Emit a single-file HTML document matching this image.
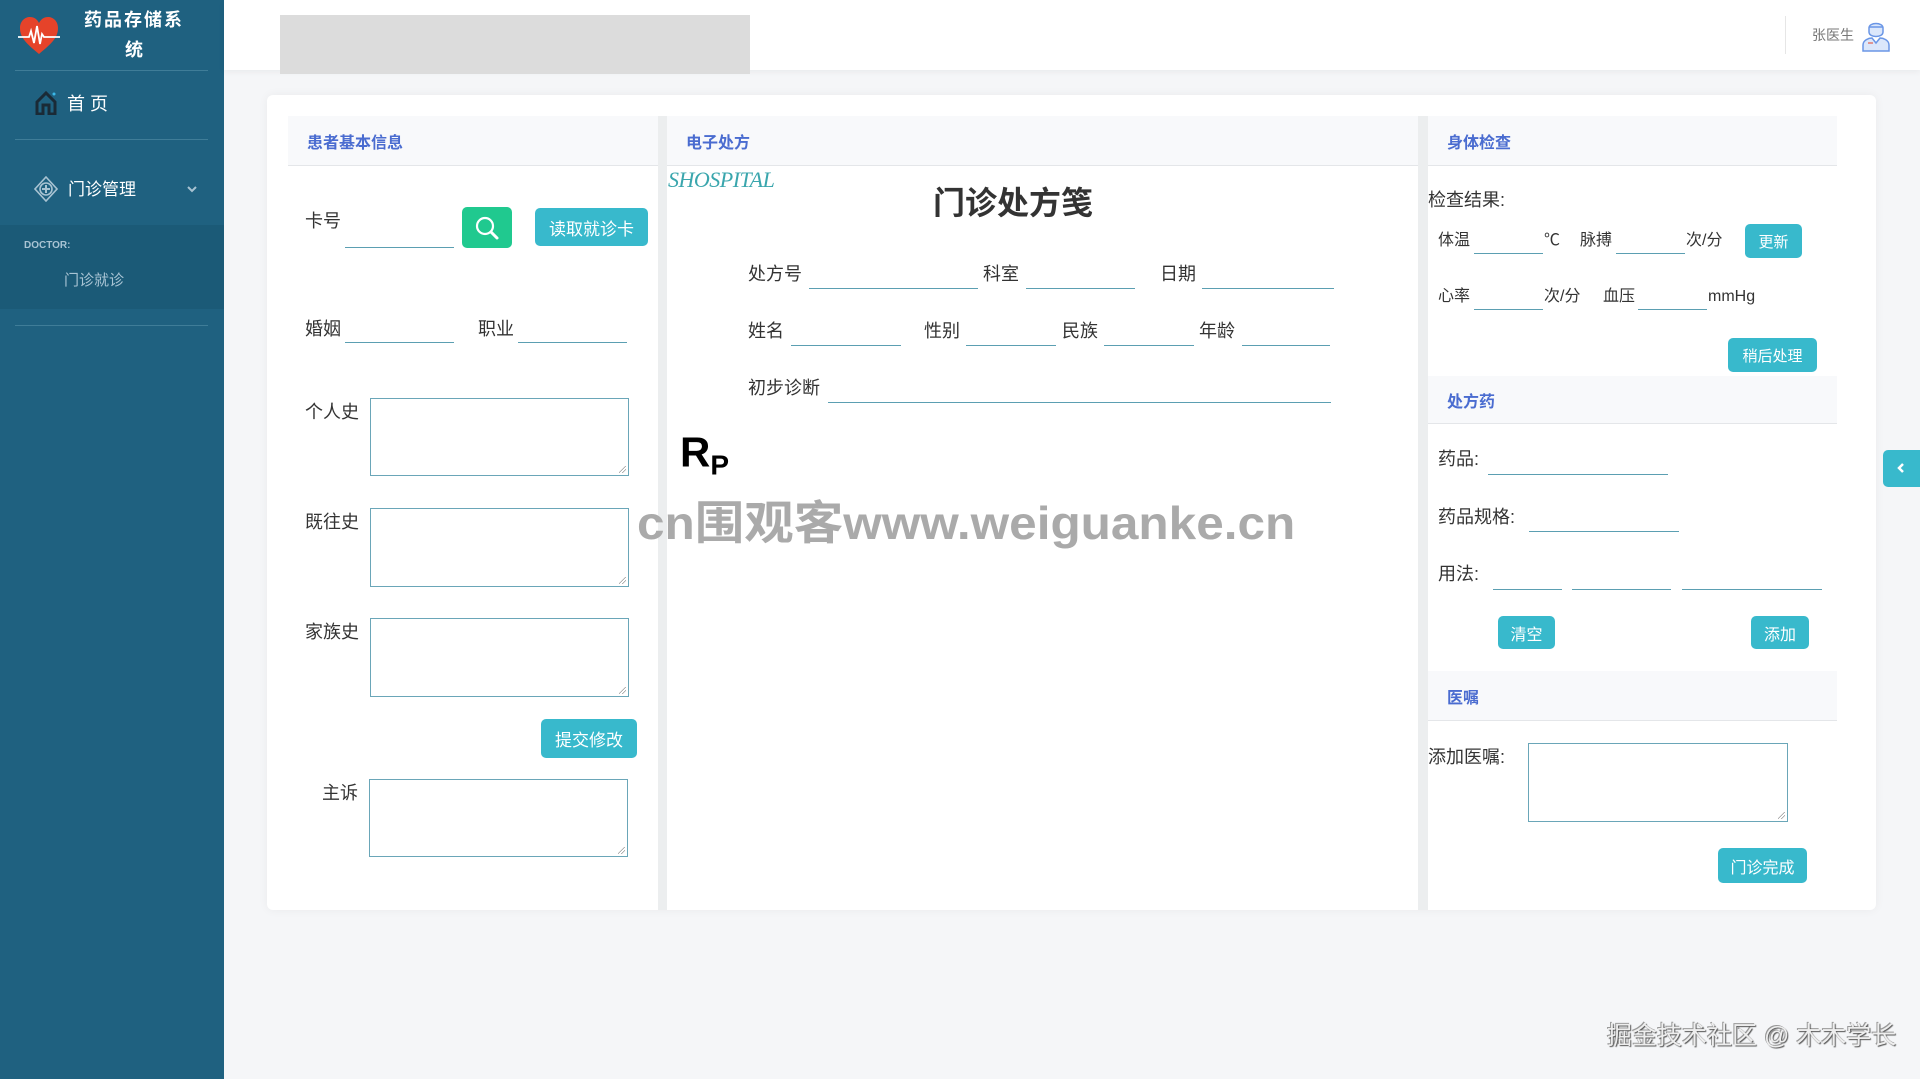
<!DOCTYPE html>
<html><head><meta charset="utf-8"><style>
*{margin:0;padding:0;box-sizing:border-box}
body{width:1920px;height:1079px;overflow:hidden;background:#f5f6f8;font-family:"Liberation Sans","Noto Sans CJK SC",sans-serif;position:relative;color:#333}
.a{position:absolute}
.t{position:absolute;font-size:18px;line-height:24px;transform:translateY(-50%);white-space:nowrap;color:#333}
.ul{position:absolute;height:1px;background:#5b9fb2}
.ta{position:absolute;border:1px solid #6aa6b8;background:#fff}
.ta:after{content:"";position:absolute;right:2px;bottom:2px;width:7px;height:7px;background:linear-gradient(135deg,transparent 45%,#999 46%,#999 52%,transparent 53%,transparent 70%,#999 71%,#999 77%,transparent 78%)}
.btn{position:absolute;background:#38b9cc;color:#fff;border-radius:5px;font-size:17px;display:flex;align-items:center;justify-content:center}
.hd{position:absolute;background:#f8f9fb;border-bottom:1px solid #e4e6e9}
.hd span{position:absolute;left:19px;top:50%;transform:translateY(-50%);color:#4a6cd0;font-weight:bold;font-size:16px}
.sl{position:absolute;left:15px;width:193px;height:1px;background:#3f7d98}
</style></head><body>
<!-- sidebar -->
<div class="a" style="left:0;top:0;width:224px;height:1079px;background:#1f6180"></div>
<div class="a" style="left:0;top:225px;width:224px;height:84px;background:#1b5a77"></div>
<svg class="a" style="left:17px;top:16px" width="44" height="40" viewBox="0 0 44 40"><path d="M22 38 C10 28 3 22 3 12 C3 5 8 1 13 1 C17 1 20 3 22 7 C24 3 27 1 31 1 C36 1 41 5 41 12 C41 22 34 28 22 38Z" fill="#e5432a"/><path d="M1 21 H12 L14 15 L17 27 L20 10 L23 28 L25 18 L27 21 H43" fill="none" stroke="#fff" stroke-width="1.8"/></svg>
<div class="t" style="left:74px;top:20px;width:120px;text-align:center;color:#fff;font-weight:bold;font-size:18px;letter-spacing:2px">药品存储系</div>
<div class="t" style="left:74px;top:50px;width:120px;text-align:center;color:#fff;font-weight:bold;font-size:18px">统</div>
<div class="sl" style="top:70px"></div>
<svg class="a" style="left:35px;top:91px" width="22" height="24" viewBox="0 0 22 24"><path d="M2 11 L11 2 L20 11 V23 H14 V14 H8 V23 H2Z" fill="none" stroke="#1a2a36" stroke-width="3"/><circle cx="19" cy="3" r="1.5" fill="#3bb8e8"/></svg>
<div class="t" style="left:67px;top:104px;color:#fff;font-size:18px">首 页</div>
<div class="sl" style="top:139px"></div>
<svg class="a" style="left:34px;top:176px" width="24" height="26" viewBox="0 0 24 26"><path d="M12 1 L23 13 L12 25 L1 13Z" fill="none" stroke="#a8c3d2" stroke-width="1.6"/><circle cx="12" cy="13" r="6" fill="none" stroke="#a8c3d2" stroke-width="1.6"/><path d="M12 9 V17 M8 13 H16" stroke="#a8c3d2" stroke-width="2"/></svg>
<div class="t" style="left:68px;top:190px;color:#fff;font-size:17px">门诊管理</div>
<svg class="a" style="left:186px;top:184px" width="12" height="10" viewBox="0 0 12 10"><path d="M2 3 L6 7 L10 3" fill="none" stroke="#a8c3d2" stroke-width="2"/></svg>
<div class="t" style="left:24px;top:246px;color:#a9c4d4;font-size:10px;font-weight:bold">DOCTOR:</div>
<div class="t" style="left:64px;top:281px;color:#a9c4d4;font-size:15px">门诊就诊</div>
<div class="sl" style="top:325px"></div>
<!-- header -->
<div class="a" style="left:224px;top:0;width:1696px;height:70px;background:#fff;box-shadow:0 2px 6px rgba(0,0,0,.05)"></div>
<div class="a" style="left:280px;top:15px;width:470px;height:59px;background:#dcdcdc"></div>
<div class="a" style="left:1785px;top:16px;width:1px;height:38px;background:#e6e6e6"></div>
<div class="t" style="left:1812px;top:35px;color:#777;font-size:14px">张医生</div>
<svg class="a" style="left:1861px;top:18px" width="30" height="34" viewBox="0 0 30 34"><path d="M8 10 C8 4 22 4 22 10 V14 C22 20 8 20 8 14Z" fill="#dbe7fb" stroke="#6a96e6" stroke-width="1.5"/><path d="M8 9 H22" stroke="#6a96e6" stroke-width="1.5"/><path d="M2 33 V27 C2 22 8 20 11 20 L15 25 L19 20 C22 20 28 22 28 27 V33Z" fill="#dbe7fb" stroke="#6a96e6" stroke-width="1.5"/><path d="M7 25 H12" stroke="#e5432a" stroke-width="1"/></svg>
<!-- card -->
<div class="a" style="left:267px;top:95px;width:1609px;height:815px;background:#fff;border-radius:6px;box-shadow:0 0 10px rgba(0,0,0,.05)"></div>
<div class="a" style="left:658px;top:116px;width:9px;height:794px;background:#eceeef"></div>
<div class="a" style="left:1418px;top:116px;width:10px;height:794px;background:#eceeef"></div>
<!-- left panel -->
<div class="hd" style="left:288px;top:116px;width:370px;height:50px"><span>患者基本信息</span></div>
<div class="t" style="left:305px;top:221px">卡号</div>
<div class="ul" style="left:345px;top:247px;width:109px"></div>
<div class="a" style="left:462px;top:207px;width:50px;height:41px;background:#20c98f;border-radius:5px"></div>
<svg class="a" style="left:474px;top:215px" width="26" height="26" viewBox="0 0 26 26"><circle cx="11" cy="11" r="8" fill="none" stroke="#fff" stroke-width="2.2"/><path d="M17 17 L23 23" stroke="#fff" stroke-width="3" stroke-linecap="round"/></svg>
<div class="btn" style="left:535px;top:208px;width:113px;height:38px">读取就诊卡</div>
<div class="t" style="left:305px;top:329px">婚姻</div>
<div class="ul" style="left:345px;top:342px;width:109px"></div>
<div class="t" style="left:478px;top:329px">职业</div>
<div class="ul" style="left:518px;top:342px;width:109px"></div>
<div class="t" style="left:305px;top:412px">个人史</div>
<div class="ta" style="left:370px;top:398px;width:259px;height:78px"></div>
<div class="t" style="left:305px;top:522px">既往史</div>
<div class="ta" style="left:370px;top:508px;width:259px;height:79px"></div>
<div class="t" style="left:305px;top:632px">家族史</div>
<div class="ta" style="left:370px;top:618px;width:259px;height:79px"></div>
<div class="btn" style="left:541px;top:719px;width:96px;height:39px">提交修改</div>
<div class="t" style="left:322px;top:793px">主诉</div>
<div class="ta" style="left:369px;top:779px;width:259px;height:78px"></div>
<!-- middle -->
<div class="hd" style="left:667px;top:116px;width:751px;height:50px"><span>电子处方</span></div>
<div class="t" style="left:668px;top:180px;font-family:'Liberation Serif',serif;font-style:italic;color:#3aa6ad;font-size:22px;letter-spacing:-0.5px">SHOSPITAL</div>
<div class="t" style="left:933px;top:203px;font-size:32px;line-height:40px;font-weight:bold;color:#333">门诊处方笺</div>
<div class="t" style="left:748px;top:274px">处方号</div><div class="ul" style="left:809px;top:288px;width:169px"></div>
<div class="t" style="left:983px;top:274px">科室</div><div class="ul" style="left:1026px;top:288px;width:109px"></div>
<div class="t" style="left:1160px;top:274px">日期</div><div class="ul" style="left:1202px;top:288px;width:132px"></div>
<div class="t" style="left:748px;top:331px">姓名</div><div class="ul" style="left:791px;top:345px;width:110px"></div>
<div class="t" style="left:924px;top:331px">性别</div><div class="ul" style="left:966px;top:345px;width:90px"></div>
<div class="t" style="left:1062px;top:331px">民族</div><div class="ul" style="left:1104px;top:345px;width:90px"></div>
<div class="t" style="left:1199px;top:331px">年龄</div><div class="ul" style="left:1242px;top:345px;width:88px"></div>
<div class="t" style="left:748px;top:388px">初步诊断</div><div class="ul" style="left:828px;top:402px;width:503px"></div>
<div class="t" style="left:680px;top:455px;font-size:42px;line-height:50px;font-weight:bold;color:#000">R<span style="font-size:28px;position:relative;top:8px">P</span></div>
<div class="t" style="left:637px;top:523px;font-size:46px;line-height:50px;font-weight:bold;color:#aaa;transform:translateY(-50%) scaleX(1.076);transform-origin:left center">cn围观客www.weiguanke.cn</div>
<!-- right -->
<div class="hd" style="left:1428px;top:116px;width:409px;height:50px"><span>身体检查</span></div>
<div class="t" style="left:1428px;top:200px">检查结果:</div>
<div class="t" style="left:1438px;top:241px;font-size:16px">体温</div><div class="ul" style="left:1474px;top:253px;width:69px"></div>
<div class="t" style="left:1544px;top:241px;font-size:16px">℃</div>
<div class="t" style="left:1580px;top:241px;font-size:16px">脉搏</div><div class="ul" style="left:1616px;top:253px;width:69px"></div>
<div class="t" style="left:1686px;top:241px;font-size:16px">次/分</div>
<div class="btn" style="left:1745px;top:224px;width:57px;height:34px;font-size:15px">更新</div>
<div class="t" style="left:1438px;top:297px;font-size:16px">心率</div><div class="ul" style="left:1474px;top:309px;width:69px"></div>
<div class="t" style="left:1544px;top:297px;font-size:16px">次/分</div>
<div class="t" style="left:1603px;top:297px;font-size:16px">血压</div><div class="ul" style="left:1638px;top:309px;width:69px"></div>
<div class="t" style="left:1708px;top:297px;font-size:16px">mmHg</div>
<div class="btn" style="left:1728px;top:338px;width:89px;height:34px;font-size:15px">稍后处理</div>
<div class="hd" style="left:1428px;top:376px;width:409px;height:48px"><span>处方药</span></div>
<div class="t" style="left:1438px;top:459px">药品:</div><div class="ul" style="left:1488px;top:474px;width:180px"></div>
<div class="t" style="left:1438px;top:517px">药品规格:</div><div class="ul" style="left:1529px;top:531px;width:150px"></div>
<div class="t" style="left:1438px;top:574px">用法:</div>
<div class="ul" style="left:1493px;top:589px;width:69px"></div>
<div class="ul" style="left:1572px;top:589px;width:99px"></div>
<div class="ul" style="left:1682px;top:589px;width:140px"></div>
<div class="btn" style="left:1498px;top:616px;width:57px;height:33px;font-size:16px">清空</div>
<div class="btn" style="left:1751px;top:616px;width:58px;height:33px;font-size:16px">添加</div>
<div class="hd" style="left:1428px;top:671px;width:409px;height:50px"><span>医嘱</span></div>
<div class="t" style="left:1428px;top:757px">添加医嘱:</div>
<div class="ta" style="left:1528px;top:743px;width:260px;height:79px"></div>
<div class="btn" style="left:1718px;top:848px;width:89px;height:35px;font-size:16px">门诊完成</div>
<!-- side tab -->
<div class="a" style="left:1883px;top:450px;width:37px;height:37px;background:#38b9cc;border-radius:5px 0 0 5px"></div>
<svg class="a" style="left:1896px;top:462px" width="10" height="12" viewBox="0 0 10 12"><path d="M7 2 L3 6 L7 10" fill="none" stroke="#fff" stroke-width="2.5"/></svg>
<div class="t" style="left:1607px;top:1036px;font-size:25px;line-height:30px;color:#eee;text-shadow:1px 1px 1px #555,-1px -1px 0 #999">掘金技术社区 @ 木木学长</div>
</body></html>
